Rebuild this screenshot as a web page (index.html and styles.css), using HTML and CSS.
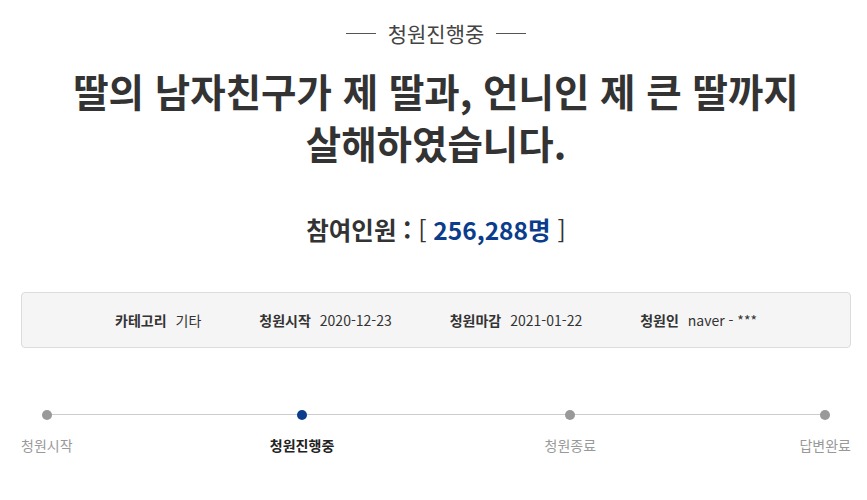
FILE: index.html
```html
<!DOCTYPE html>
<html lang="ko">
<head>
<meta charset="utf-8">
<link rel="stylesheet" href="styles.css">
</head>
<body>
<div class="page">
  <div class="status">
    <span class="status-line"></span>
    <span class="status-text">청원진행중</span>
    <span class="status-line"></span>
  </div>
  <h1 class="title">딸의 남자친구가 제 딸과, 언니인 제 큰 딸까지<br>살해하였습니다.</h1>
  <div class="count">참여인원 : <span class="count-num">[ <em>256,288명</em> ]</span></div>
  <div class="meta">
    <div class="meta-item"><b>카테고리</b><span>기타</span></div>
    <div class="meta-item"><b>청원시작</b><span>2020-12-23</span></div>
    <div class="meta-item"><b>청원마감</b><span>2021-01-22</span></div>
    <div class="meta-item"><b>청원인</b><span>naver - ***</span></div>
  </div>
  <div class="steps">
    <div class="step"><span class="dot"></span><span class="label">청원시작</span></div>
    <div class="step active"><span class="dot"></span><span class="label">청원진행중</span></div>
    <div class="step"><span class="dot"></span><span class="label">청원종료</span></div>
    <div class="step"><span class="dot"></span><span class="label">답변완료</span></div>
  </div>
</div>
</body>
</html>
```
FILE: styles.css
```css
* { box-sizing: border-box; }
html, body { margin: 0; padding: 0; background: #fff; }
body {
  font-family: "Noto Sans CJK KR", "Noto Sans", sans-serif;
  color: #333;
}
.page {
  padding: 16px 16px 0 21px;
}
.status {
  display: flex;
  align-items: center;
  justify-content: center;
  gap: 12px;
  height: 34px;
}
.status-line {
  width: 30px;
  height: 1px;
  background: #555;
}
.status-text {
  font-size: 21px;
  color: #444;
  line-height: 34px;
}
.title {
  margin: 14px 0 0;
  text-align: center;
  font-size: 38.5px;
  font-weight: 700;
  line-height: 52px;
  color: #333;
  letter-spacing: 0;
}
.count {
  margin-top: 44px;
  text-align: center;
  font-size: 24.5px;
  font-weight: 700;
  line-height: 36px;
  color: #333;
}
.count-num {
  font-weight: 400;
}
.count-num em {
  font-style: normal;
  font-weight: 700;
  color: #0b3d8c;
}
.meta {
  margin-top: 44px;
  height: 56px;
  display: flex;
  align-items: center;
  justify-content: center;
  gap: 58px;
  background: #f5f5f5;
  border: 1px solid #dcdcdc;
  border-radius: 4px;
  font-size: 14px;
}
.meta-item b {
  font-weight: 700;
  margin-right: 9px;
}
.meta-item span {
  color: #333;
}
.steps {
  margin-top: 62px;
  position: relative;
  display: flex;
  justify-content: space-between;
}
.steps::before {
  content: "";
  position: absolute;
  left: 26px;
  right: 28px;
  top: 4px;
  height: 1px;
  background: #cccccc;
}
.step {
  position: relative;
  display: flex;
  flex-direction: column;
  align-items: center;
  gap: 15px;
}
.step.active {
  margin-left: -6px;
  margin-right: 7px;
}
.dot {
  width: 10px;
  height: 10px;
  border-radius: 50%;
  background: #999;
}
.label {
  font-size: 14px;
  color: #999;
  line-height: 20px;
}
.step.active .dot { background: #0b3d8c; }
.step.active .label { color: #222; font-weight: 700; }
```
